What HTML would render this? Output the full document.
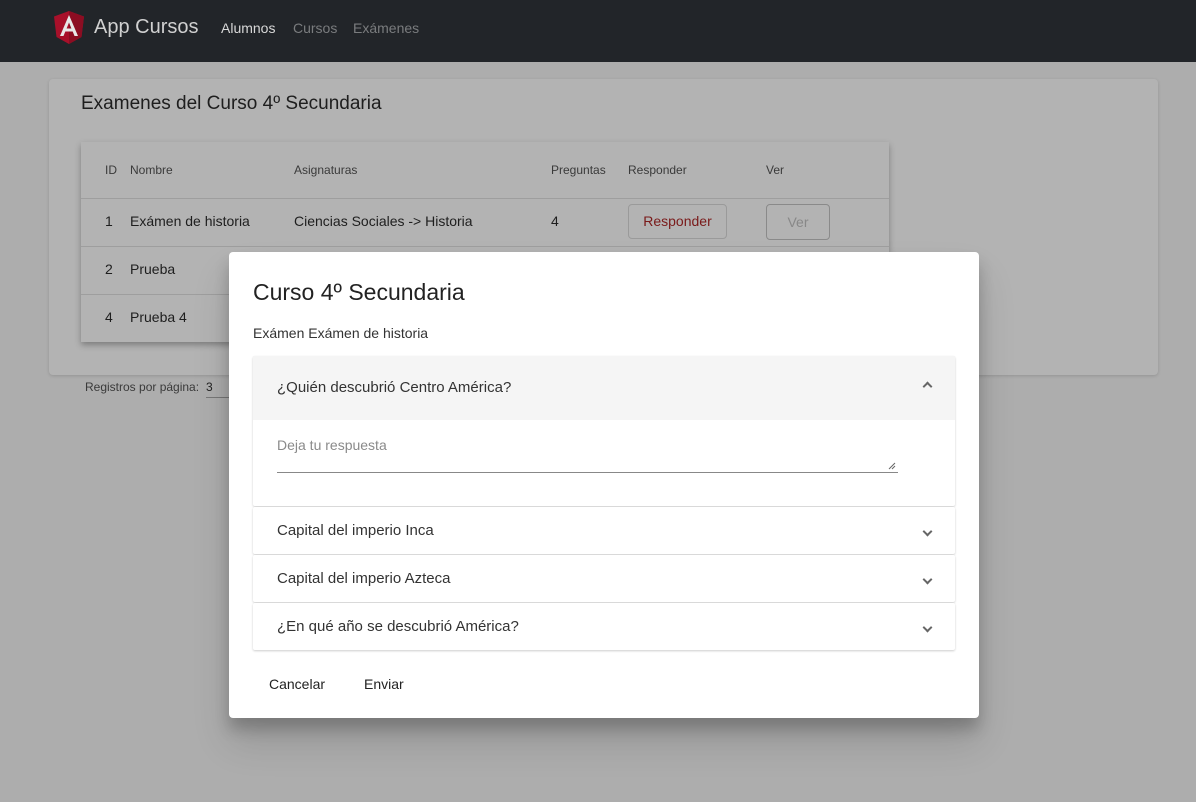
<!DOCTYPE html>
<html><head><meta charset="utf-8"><style>
*{box-sizing:border-box;margin:0;padding:0}
body{width:1196px;height:802px;overflow:hidden;background:#adadad;font-family:"Liberation Sans",Arial,sans-serif;position:relative;color:#222}
.nav{position:absolute;left:0;top:0;width:1196px;height:62px;background:#222529}
.abs{position:absolute;white-space:nowrap}
.card{position:absolute;left:49px;top:79px;width:1109px;height:296px;background:#b3b3b3;border-radius:4px;box-shadow:0 1px 3px rgba(0,0,0,.15)}
.tbl{position:absolute;left:81px;top:142px;width:808px;height:200px;background:#b3b3b3;box-shadow:0 3px 6px rgba(0,0,0,.3)}
.line{position:absolute;left:81px;width:808px;height:1px;background:#9e9e9e}
.th{font-size:12px;color:#3a3a3a}
.td{font-size:14px;color:#1e1e1e}
.dlg{position:absolute;left:229px;top:252px;width:750px;height:466px;background:#fff;border-radius:4px;box-shadow:0 11px 15px rgba(0,0,0,.2),0 24px 38px rgba(0,0,0,.14)}
.panel{position:absolute;left:24px;width:702px;background:#fff;box-shadow:0 1px 2px rgba(0,0,0,.2);border-radius:2px}
.ptxt{position:absolute;left:24px;font-size:15px;color:#333}
.chev{position:absolute;right:24px;width:7px;height:7px;border-right:2px solid #666;border-bottom:2px solid #666}
</style></head><body>
<div class="nav"></div>
<svg class="abs" style="left:54px;top:11px" width="30" height="34" viewBox="0 0 30 34"><path d="M15 0 L30 5.5 L27.5 26 L15 33 L2.5 26 L0 5.5Z" fill="#a8102a"/><path d="M15 0 L30 5.5 L27.5 26 L15 33Z" fill="#8c0d22"/><path d="M15 4 L6 25 H9.5 L11.3 20.5 H18.7 L20.5 25 H24 Z M12.6 17.5 L15 11.5 L17.4 17.5Z" fill="#e8e8e8"/></svg>
<div class="abs" style="left:94px;top:16px;font-size:20px;color:#d0d0d0">App Cursos</div>
<div class="abs" style="left:221px;top:20px;font-size:14px;color:#d8d8d8">Alumnos</div>
<div class="abs" style="left:293px;top:20px;font-size:14px;color:#7a7c7e">Cursos</div>
<div class="abs" style="left:353px;top:20px;font-size:14px;color:#7a7c7e">Exámenes</div>
<div class="card"></div>
<div class="abs" style="left:81px;top:93px;font-size:19px;color:#1e1e1e">Examenes del Curso 4º Secundaria</div>
<div class="tbl"></div>
<div class="line" style="top:198px"></div><div class="line" style="top:246px"></div><div class="line" style="top:294px"></div>
<div class="abs th" style="left:105px;top:163px">ID</div>
<div class="abs th" style="left:130px;top:163px">Nombre</div>
<div class="abs th" style="left:294px;top:163px">Asignaturas</div>
<div class="abs th" style="left:551px;top:163px">Preguntas</div>
<div class="abs th" style="left:628px;top:163px">Responder</div>
<div class="abs th" style="left:766px;top:163px">Ver</div>
<div class="abs td" style="left:105px;top:213px">1</div>
<div class="abs td" style="left:130px;top:213px">Exámen de historia</div>
<div class="abs td" style="left:294px;top:213px">Ciencias Sociales -&gt; Historia</div>
<div class="abs td" style="left:551px;top:213px">4</div>
<div class="abs" style="left:628px;top:204px;width:99px;height:35px;border:1px solid #9a9a9a;border-radius:4px;font-size:14px;color:#7a1a1a;text-align:center;line-height:33px">Responder</div>
<div class="abs" style="left:766px;top:204px;width:64px;height:36px;border:1px solid #8a8a8a;border-radius:4px;font-size:14px;color:#888;text-align:center;line-height:34px">Ver</div>
<div class="abs td" style="left:105px;top:261px">2</div>
<div class="abs td" style="left:130px;top:261px">Prueba</div>
<div class="abs td" style="left:105px;top:309px">4</div>
<div class="abs td" style="left:130px;top:309px">Prueba 4</div>
<div class="abs" style="left:85px;top:380px;font-size:12px;color:#3a3a3a">Registros por página:</div>
<div class="abs" style="left:206px;top:380px;font-size:12px;color:#222">3</div>
<div class="abs" style="left:206px;top:397px;width:23px;height:1px;background:#777"></div>
<div class="dlg">
<div class="abs" style="left:24px;top:27px;font-size:23px;color:#222">Curso 4º Secundaria</div>
<div class="abs" style="left:24px;top:73px;font-size:14px;color:#333">Exámen Exámen de historia</div>
<div class="panel" style="top:104px;height:150px">
 <div style="position:absolute;left:0;top:0;width:702px;height:64px;background:#f5f5f5"></div>
 <div class="ptxt" style="top:23px">¿Quién descubrió Centro América?</div>
 <div class="chev" style="top:27px;transform:rotate(-135deg)"></div>
 <div class="abs" style="left:24px;top:81px;font-size:14px;color:#8a8a8a">Deja tu respuesta</div>
 <div class="abs" style="left:24px;top:116px;width:621px;height:1px;background:#888"></div>
 <svg class="abs" style="left:635px;top:106px" width="8" height="8"><path d="M1 7 L7 1 M4 7 L7 4" stroke="#666"/></svg>
</div>
<div class="panel" style="top:255px;height:47px"><div class="ptxt" style="top:15px">Capital del imperio Inca</div><div class="chev" style="top:21px;transform:rotate(45deg)"></div></div>
<div class="panel" style="top:303px;height:47px"><div class="ptxt" style="top:15px">Capital del imperio Azteca</div><div class="chev" style="top:21px;transform:rotate(45deg)"></div></div>
<div class="panel" style="top:351px;height:47px"><div class="ptxt" style="top:15px">¿En qué año se descubrió América?</div><div class="chev" style="top:21px;transform:rotate(45deg)"></div></div>
<div class="abs" style="left:40px;top:424px;font-size:14px;color:#222">Cancelar</div>
<div class="abs" style="left:135px;top:424px;font-size:14px;color:#222">Enviar</div>
</div>
</body></html>
